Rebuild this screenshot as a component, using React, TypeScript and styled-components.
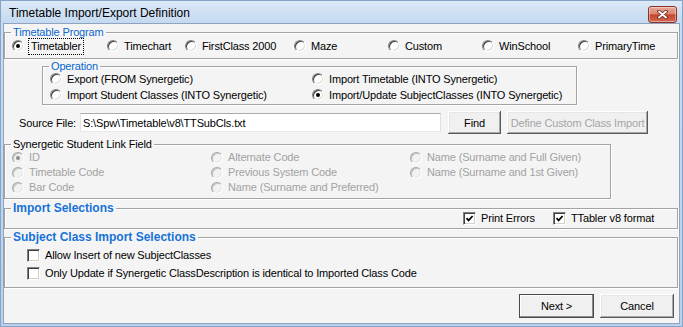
import styled, { createGlobalStyle, css } from "styled-components";

//#region data
const programs = [
  { label: "Timetabler", checked: true, focus: true },
  { label: "Timechart" },
  { label: "FirstClass 2000" },
  { label: "Maze" },
  { label: "Custom" },
  { label: "WinSchool" },
  { label: "PrimaryTime" },
];

// grid order is column by column
const operations = [
  { label: "Export (FROM Synergetic)" },
  { label: "Import Student Classes (INTO Synergetic)" },
  { label: "Import Timetable (INTO Synergetic)" },
  { label: "Import/Update SubjectClasses (INTO Synergetic)", checked: true },
];

const linkFields = [
  { label: "ID", checked: true },
  { label: "Timetable Code" },
  { label: "Bar Code" },
  { label: "Alternate Code" },
  { label: "Previous System Code" },
  { label: "Name (Surname and Preferred)" },
  { label: "Name (Surname and Full Given)" },
  { label: "Name (Surname and 1st Given)" },
];

const subjectOptions = [
  "Allow Insert of new SubjectClasses",
  "Only Update if Synergetic ClassDescription is identical to Imported Class Code",
];
//#endregion data

//#region styles
const GlobalStyle = createGlobalStyle`
  * { box-sizing: border-box; }
  html, body { margin: 0; padding: 0; }
  body {
    width: 683px;
    height: 327px;
    overflow: hidden;
    background: #c2d8f1;
    font-family: "Liberation Sans", Arial, sans-serif;
    font-size: 11px;
    letter-spacing: -0.15px;
    color: #000;
  }
`;

const Window = styled.div`
  width: 683px;
  height: 327px;
  display: flex;
  flex-direction: column;
  border: 1px solid #86a4c8;
  background: linear-gradient(#c9ddf3, #b9d1ec);
`;

const TitleBar = styled.div`
  flex: none;
  height: 22px;
  display: flex;
  align-items: center;
  justify-content: space-between;
  padding: 0 5px 0 8px;
  background: linear-gradient(#dce9f7, #c4d9f0);
`;

const Title = styled.span`
  font-size: 12px;
  letter-spacing: 0;
  line-height: 22px;
  margin-top: 2px;
`;

const CloseButton = styled.div`
  width: 29px;
  height: 17px;
  margin-top: 4px;
  display: grid;
  place-items: center;
  border: 1px solid #8a3427;
  border-radius: 3px;
  background: linear-gradient(#eaa898 0%, #dc8470 46%, #c6452d 52%, #d26a52 100%);
  box-shadow: inset 0 0 0 1px rgba(255, 255, 255, 0.4);
`;

const Client = styled.div`
  flex: 1;
  display: flex;
  flex-direction: column;
  margin: 0 2px 2px;
  padding-top: 2px;
  border: 1px solid #8ea3bd;
  background: #f4f4f4;
`;

const Group = styled.fieldset<{ $top: number }>`
  margin: ${(p) => p.$top}px 0 0;
  padding: 0;
  min-width: 0;
  border: 1px solid #a3a3a3;
  box-shadow: inset 1px 1px 0 #fff, 1px 1px 0 #fff;
`;

const ProgramGroup = styled(Group)`
  margin-right: 1px;
  padding-bottom: 5px;
`;

const OperationGroup = styled(Group)`
  width: 535px;
  margin-left: 38px;
  padding-bottom: 1px;
`;

const LinkGroup = styled(Group)`
  width: 607px;
  padding-bottom: 3px;
`;

const SelectionGroup = styled(Group)<{ $padBottom: number }>`
  margin-right: 1px;
  padding-bottom: ${(p) => p.$padBottom}px;
`;

const Legend = styled.legend<{ $tone: "blue" | "plain" | "heading" }>`
  margin-left: 6px;
  padding: 0 2px;
  line-height: 13px;
  font-size: ${(p) => (p.$tone === "heading" ? 12 : 11)}px;
  letter-spacing: ${(p) => (p.$tone === "heading" ? "0" : "-0.15px")};
  color: ${(p) => (p.$tone === "plain" ? "#000" : p.$tone === "blue" ? "#0a66cc" : "#1672d6")};
  font-weight: ${(p) => (p.$tone === "heading" ? "bold" : "normal")};
`;

const ProgramRow = styled.div`
  display: grid;
  grid-template-columns: 95px 78px 109px 94px 94px 96px 1fr;
  align-items: center;
  height: 14px;
  padding-left: 7px;
`;

const OperationGrid = styled.div`
  display: grid;
  grid-template-columns: 262px 1fr;
  grid-template-rows: repeat(2, 16px);
  grid-auto-flow: column;
  align-items: center;
  margin-top: -2px;
  padding-left: 7px;
`;

const LinkGrid = styled.div`
  display: grid;
  grid-template-columns: 199px 199px 1fr;
  grid-template-rows: repeat(3, 15px);
  grid-auto-flow: column;
  align-items: center;
  margin-top: -1px;
  padding-left: 7px;
`;

const ImportRow = styled.div`
  display: flex;
  align-items: center;
  height: 14px;
  margin-top: -4px;
  padding-left: 458px;
`;

const SubjectList = styled.div`
  display: grid;
  grid-auto-rows: 18px;
  align-items: center;
  margin-top: 2px;
  padding-left: 22px;
`;

const Option = styled.label<{ $disabled?: boolean; $width?: number }>`
  display: flex;
  align-items: center;
  gap: 5px;
  white-space: nowrap;
  width: ${(p) => (p.$width ? `${p.$width}px` : "auto")};
  color: ${(p) => (p.$disabled ? "#a2a2a2" : "#000")};
`;

const OptionText = styled.span<{ $focus?: boolean }>`
  line-height: 13px;
  ${(p) =>
    p.$focus &&
    css`
      outline: 1px dotted #000;
      outline-offset: 1px;
      padding: 0 1px;
      margin-left: 1px;
    `}
`;

const Radio = styled.span<{ $checked?: boolean; $disabled?: boolean }>`
  flex: none;
  width: 12px;
  height: 12px;
  display: grid;
  place-items: center;
  border-radius: 50%;
  border: 1px solid;
  border-color: ${(p) => (p.$disabled ? "#a8a8a8 #fff #fff #a8a8a8" : "#808080 #fff #fff #808080")};
  box-shadow: ${(p) =>
    p.$disabled ? "inset 1px 1px 0 #c4c4c4, inset -1px -1px 0 #e6e6e6" : "inset 1px 1px 0 #404040, inset -1px -1px 0 #d8d8d8"};
  background: ${(p) => (p.$disabled ? "#f2f2f2" : "#fff")};

  &::after {
    content: "";
    width: 4px;
    height: 4px;
    border-radius: 50%;
    background: ${(p) => (p.$disabled ? "#8c8c8c" : "#000")};
    visibility: ${(p) => (p.$checked ? "visible" : "hidden")};
  }
`;

const CheckBox = styled.span`
  flex: none;
  width: 13px;
  height: 13px;
  display: grid;
  place-items: center;
  border: 1px solid;
  border-color: #808080 #fff #fff #808080;
  box-shadow: inset 1px 1px 0 #404040, inset -1px -1px 0 #d4d0c8;
  background: #fff;
`;

const SourceRow = styled.div`
  display: flex;
  align-items: center;
  height: 23px;
  margin-top: 6px;
`;

const FieldLabel = styled.span`
  width: 72px;
  margin-right: 4px;
  text-align: right;
  white-space: nowrap;
`;

const PathInput = styled.input`
  width: 361px;
  height: 19px;
  margin: 0 7px 0 0;
  padding: 0 2px;
  border: 1px solid;
  border-color: #abadb3 #dbdfe6 #e3e9ef #e2e3ea;
  background: #fff;
  font: inherit;
  letter-spacing: inherit;
  color: #000;
  outline: none;
`;

const Button = styled.button<{ $width: number; $isDefault?: boolean }>`
  width: ${(p) => p.$width}px;
  height: 100%;
  margin: 0;
  padding: 0;
  border: none;
  background: #f0f0f0;
  font: inherit;
  font-size: 11px;
  letter-spacing: inherit;
  color: #000;
  box-shadow: ${(p) =>
    p.$isDefault
      ? "inset 0 0 0 1px #4a4a4a, inset -2px -2px 0 #8c8c8c, inset 2px 2px 0 #fff"
      : "inset -1px -1px 0 #5a5a5a, inset 1px 1px 0 #fff, inset -2px -2px 0 #a8a8a8, inset 2px 2px 0 #e6e6e6"};

  &:disabled {
    color: #a5a5a5;
  }
`;

const FindButton = styled(Button)`
  margin-right: 6px;
`;

const ButtonRow = styled.div`
  display: flex;
  justify-content: flex-end;
  gap: 6px;
  height: 24px;
  margin-top: 6px;
  padding-right: 5px;
`;
//#endregion styles

function CloseGlyph() {
  return (
    <svg width="11" height="9" viewBox="0 0 11 9">
      <path d="M2 1.5 L9 7.5 M9 1.5 L2 7.5" stroke="#6b2418" strokeWidth="3.6" strokeLinecap="round" />
      <path d="M2 1.5 L9 7.5 M9 1.5 L2 7.5" stroke="#fff" strokeWidth="1.9" strokeLinecap="round" />
    </svg>
  );
}

function Tick() {
  return (
    <svg width="9" height="9" viewBox="0 0 9 9">
      <path d="M1.5 4.2 L3.6 6.4 L7.6 2" fill="none" stroke="#000" strokeWidth="1.7" />
    </svg>
  );
}

type RadioItem = { label: string; checked?: boolean; focus?: boolean };

function RadioOption({ item, disabled }: { item: RadioItem; disabled?: boolean }) {
  return (
    <Option $disabled={disabled}>
      <Radio $checked={item.checked} $disabled={disabled} />
      <OptionText $focus={item.focus}>{item.label}</OptionText>
    </Option>
  );
}

function CheckOption({ label, checked, width }: { label: string; checked?: boolean; width?: number }) {
  return (
    <Option $width={width}>
      <CheckBox>{checked && <Tick />}</CheckBox>
      <OptionText>{label}</OptionText>
    </Option>
  );
}

export default function App() {
  return (
    <>
      <GlobalStyle />
      <Window>
        <TitleBar>
          <Title>Timetable Import/Export Definition</Title>
          <CloseButton>
            <CloseGlyph />
          </CloseButton>
        </TitleBar>
        <Client>
          <ProgramGroup $top={0}>
            <Legend $tone="blue">Timetable Program</Legend>
            <ProgramRow>
              {programs.map((p) => (
                <RadioOption key={p.label} item={p} />
              ))}
            </ProgramRow>
          </ProgramGroup>

          <OperationGroup $top={1}>
            <Legend $tone="blue">Operation</Legend>
            <OperationGrid>
              {operations.map((o) => (
                <RadioOption key={o.label} item={o} />
              ))}
            </OperationGrid>
          </OperationGroup>

          <SourceRow>
            <FieldLabel>Source File:</FieldLabel>
            <PathInput readOnly value={"S:\\Spw\\Timetable\\v8\\TTSubCls.txt"} />
            <FindButton $width={53}>Find</FindButton>
            <Button $width={141} disabled>
              Define Custom Class Import
            </Button>
          </SourceRow>

          <LinkGroup $top={4}>
            <Legend $tone="plain">Synergetic Student Link Field</Legend>
            <LinkGrid>
              {linkFields.map((f) => (
                <RadioOption key={f.label} item={f} disabled />
              ))}
            </LinkGrid>
          </LinkGroup>

          <SelectionGroup $top={3} $padBottom={3}>
            <Legend $tone="heading">Import Selections</Legend>
            <ImportRow>
              <CheckOption label="Print Errors" checked width={90} />
              <CheckOption label="TTabler v8 format" checked />
            </ImportRow>
          </SelectionGroup>

          <SelectionGroup $top={2} $padBottom={5}>
            <Legend $tone="heading">Subject Class Import Selections</Legend>
            <SubjectList>
              {subjectOptions.map((s) => (
                <CheckOption key={s} label={s} />
              ))}
            </SubjectList>
          </SelectionGroup>

          <ButtonRow>
            <Button $width={75} $isDefault>
              Next &gt;
            </Button>
            <Button $width={74}>Cancel</Button>
          </ButtonRow>
        </Client>
      </Window>
    </>
  );
}
